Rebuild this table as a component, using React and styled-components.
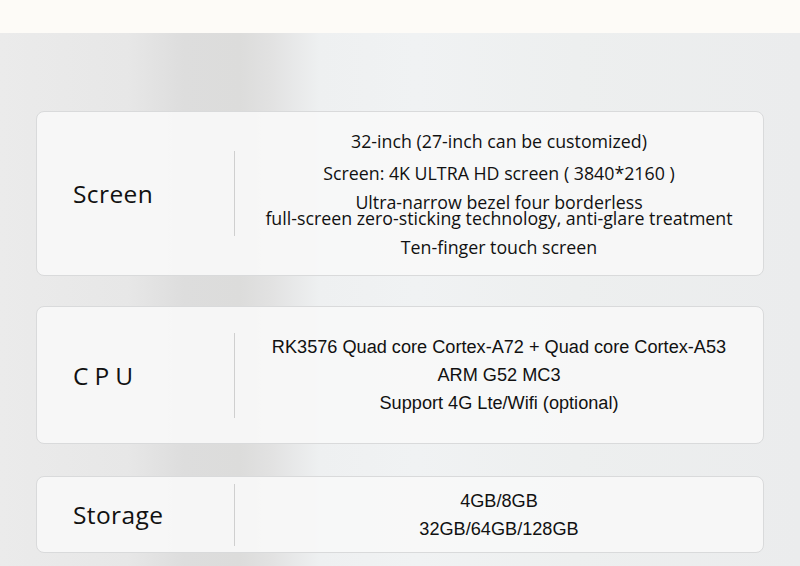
import React from 'react';
import styled, { createGlobalStyle } from 'styled-components';

const specs = [
  {
    label: 'Screen',
    height: 165,
    divider: 85,
    tight: false,
    lines: [
      ['32-inch (27-inch can be customized)'],
      ['Screen: 4K ULTRA HD screen ( 3840*2160 )'],
      ['Ultra-narrow bezel four borderless', 'full-screen zero-sticking technology, anti-glare treatment'],
      ['Ten-finger touch screen'],
    ],
  },
  {
    label: 'CPU',
    spaced: true,
    height: 138,
    divider: 85,
    tight: true,
    lines: [
      ['RK3576 Quad core Cortex-A72 + Quad core Cortex-A53'],
      ['ARM G52 MC3'],
      ['Support 4G Lte/Wifi (optional)'],
    ],
  },
  {
    label: 'Storage',
    height: 77,
    divider: 62,
    offset: 2,
    tight: true,
    lines: [['4GB/8GB'], ['32GB/64GB/128GB']],
  },
];

const App = () => {
  return (
    <>
      <GlobalStyle />
      <Page>
        <TopBand />
        <Section>
          {specs.map((spec) => (
            <Card key={spec.label} $height={spec.height} $offset={spec.offset || 0}>
              <Label $spaced={spec.spaced}>{spec.label}</Label>
              <Divider $height={spec.divider} />
              <Content $tight={spec.tight}>
                {spec.lines.map((para, idx) => (
                  <Para key={idx} $tight={spec.tight} $multi={para.length > 1}>
                    {para.map((text) => (
                      <span key={text}>{text}</span>
                    ))}
                  </Para>
                ))}
              </Content>
            </Card>
          ))}
        </Section>
      </Page>
    </>
  );
};

export default App;

const GlobalStyle = createGlobalStyle`
  html, body {
    margin: 0;
    padding: 0;
  }
  body {
    font-family: "Open Sans", "Noto Sans", sans-serif;
    color: #111;
  }
`;

const Page = styled.div`
  width: 800px;
  height: 566px;
  overflow: hidden;
  display: flex;
  flex-direction: column;
  background: linear-gradient(
    90deg,
    #ebebeb 0%,
    #e7e7e7 16%,
    #dddddd 23%,
    #dcdcdb 30%,
    #e2e2e2 34%,
    #eef0f1 40%,
    #f0f2f3 52%,
    #edefef 72%,
    #ebeced 100%
  );
`;

const TopBand = styled.div`
  height: 33px;
  flex-shrink: 0;
  background: #fdfbf7;
`;

const Section = styled.div`
  display: flex;
  flex-direction: column;
  gap: 30px;
  padding: 78px 36px 0 36px;
`;

const Card = styled.div`
  display: flex;
  align-items: center;
  height: ${({ $height }) => $height}px;
  margin-top: ${({ $offset }) => $offset}px;
  flex-shrink: 0;
  box-sizing: border-box;
  background: rgba(248, 248, 248, 0.94);
  border: 1px solid #d9dadb;
  border-radius: 8px;
`;

const Label = styled.div`
  width: 161px;
  padding-left: 36px;
  font-size: 24.5px;
  letter-spacing: ${({ $spaced }) => ($spaced ? '6px' : '0.4px')};
  color: #111;
`;

const Divider = styled.div`
  width: 1px;
  height: ${({ $height }) => $height}px;
  background: #cfcfcf;
`;

const Content = styled.div`
  flex: 1;
  display: flex;
  flex-direction: column;
  align-items: center;
  gap: ${({ $tight }) => ($tight ? '0' : '10px')};
  font-family: ${({ $tight }) =>
    $tight ? '"Liberation Sans", Arial, sans-serif' : '"Open Sans", "Noto Sans", sans-serif'};
  font-size: ${({ $tight }) => ($tight ? '18.15px' : '17.8px')};
  color: #111;
`;

const Para = styled.div`
  display: flex;
  flex-direction: column;
  align-items: center;
  text-align: center;
  line-height: ${({ $tight, $multi }) => ($tight ? '28px' : $multi ? '16px' : '22px')};
`;
